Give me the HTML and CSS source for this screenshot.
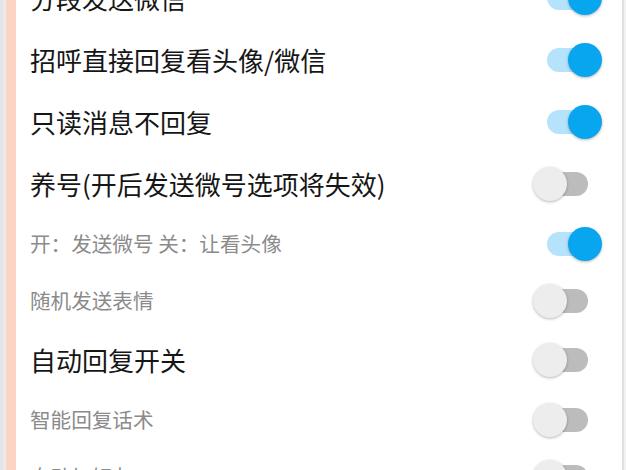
FILE: index.html
```html
<!DOCTYPE html>
<html lang="zh-CN">
<head>
<meta charset="utf-8">
<title>设置</title>
<link rel="stylesheet" href="styles.css">
</head>
<body>
<div class="screen">
  <div class="edge-gray"></div>
  <div class="edge-peach"></div>
  <div class="panel">
    <ul class="list">
      <li class="row big"><span class="label">分段发送微信</span><span class="switch on"><span class="track"></span><span class="thumb"></span></span></li>
      <li class="row big"><span class="label">招呼直接回复看头像/微信</span><span class="switch on"><span class="track"></span><span class="thumb"></span></span></li>
      <li class="row big"><span class="label">只读消息不回复</span><span class="switch on"><span class="track"></span><span class="thumb"></span></span></li>
      <li class="row big"><span class="label">养号(开后发送微号选项将失效)</span><span class="switch"><span class="track"></span><span class="thumb"></span></span></li>
      <li class="row small"><span class="label">开：发送微号 关：让看头像</span><span class="switch on"><span class="track"></span><span class="thumb"></span></span></li>
      <li class="row small"><span class="label">随机发送表情</span><span class="switch"><span class="track"></span><span class="thumb"></span></span></li>
      <li class="row big"><span class="label">自动回复开关</span><span class="switch"><span class="track"></span><span class="thumb"></span></span></li>
      <li class="row small"><span class="label">智能回复话术</span><span class="switch"><span class="track"></span><span class="thumb"></span></span></li>
      <li class="row small"><span class="label">自动加好友</span><span class="switch"><span class="track"></span><span class="thumb"></span></span></li>
    </ul>
  </div>
  <div class="edge-line"></div>
  <div class="edge-right"></div>
</div>
</body>
</html>
```
FILE: styles.css
```css
* { box-sizing: border-box; }
html, body {
  margin: 0;
  padding: 0;
  width: 626px;
  height: 470px;
  overflow: hidden;
  background: #ffffff;
  font-family: "Noto Sans CJK SC", "Noto Sans", sans-serif;
}
.screen {
  display: flex;
  width: 626px;
  height: 470px;
  overflow: hidden;
}
.edge-gray {
  width: 6px;
  flex: none;
  background: linear-gradient(to right, #e3e3e7, #ececef);
}
.edge-peach {
  width: 10px;
  flex: none;
  background: #fdd4c4;
}
.panel {
  flex: 1;
  background: #ffffff;
  overflow: hidden;
}
.edge-line {
  width: 2px;
  flex: none;
  background: #e0e0e0;
}
.edge-right {
  width: 2px;
  flex: none;
  background: #f2f2f2;
}
.list {
  list-style: none;
  margin: -33px 0 0 0;
  padding: 0;
}
.row {
  display: flex;
  align-items: center;
  justify-content: space-between;
  padding: 0 20px 0 14px;
}
.row.big { height: 62px; }
.row.small { height: 57px; }
.label {
  white-space: nowrap;
  line-height: 1;
}
.big .label {
  font-size: 26px;
  color: #161616;
}
.small .label {
  font-size: 20.6px;
  color: #8b8b8b;
}
.switch {
  position: relative;
  flex: none;
  width: 69px;
  height: 34px;
}
.track {
  position: absolute;
  left: 14px;
  top: 5px;
  width: 41px;
  height: 24px;
  border-radius: 12px;
  background: #bcbcbc;
}
.thumb {
  position: absolute;
  left: 0;
  top: 0;
  width: 34px;
  height: 34px;
  border-radius: 50%;
  background: #ededed;
  box-shadow: 0 1px 3px rgba(0, 0, 0, 0.28);
}
.switch.on .track { background: #b5e3fb; }
.switch.on .thumb {
  left: 35px;
  background: #07a6ef;
}
```
